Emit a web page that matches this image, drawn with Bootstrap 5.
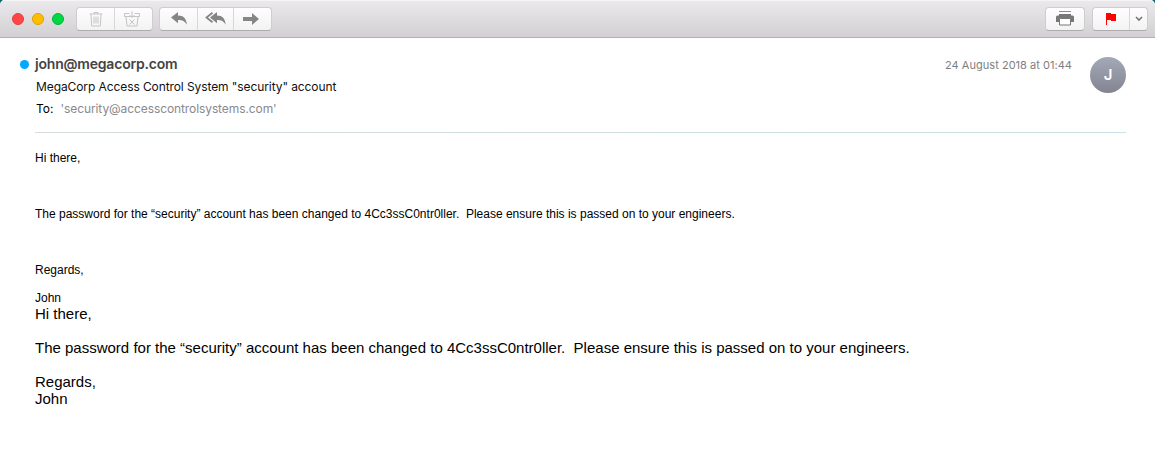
<!DOCTYPE html>
<html lang="en">
<head>
<meta charset="utf-8">
<meta name="viewport" content="width=device-width, initial-scale=1">
<title>Mail</title>
<link href="https://cdn.jsdelivr.net/npm/bootstrap@5.3.0/dist/css/bootstrap.min.css" rel="stylesheet">
<style>
html{background:#0b6870}
body{background:#0b6870;font-family:"Liberation Sans",Arial,sans-serif;color:#000;overflow:hidden}
.mail-window{height:463px;border-radius:5px 5px 0 0;background:#fff;overflow:hidden}
.toolbar{height:38px;padding:0 7px 0 12px;background:linear-gradient(#ebe9eb,#d2d0d2);border-bottom:1px solid #b1afb1;box-shadow:inset 0 1px #f5f4f5}
.lights{gap:8px;margin-right:12px}
.light{width:12px;height:12px;border-radius:50%;border:1px solid}
.l-red{background:#ff4645;border-color:#e23f3e}
.l-yellow{background:#ffbd00;border-color:#e0a000}
.l-green{background:#00d742;border-color:#00b638}
.tool-group{height:24px;border:1px solid #cfcdcf;border-bottom-color:#aeacae;border-radius:4px;background:linear-gradient(#fefefe,#f3f3f3);overflow:hidden}
.tool{padding:0;border:0;border-radius:0;background:none;height:22px;width:37px;display:flex;align-items:center;justify-content:center;flex:none}
.tool+.tool{border-left:1px solid #d9d8d9}
.w38{width:38px}
.w36{width:36px}
.w18{width:18px}
.gap-left-6{margin-left:6px}
.gap-left-7{margin-left:7px}
.head-font{font-family:Inter,sans-serif}
.head{height:94px;padding:18px 29px 0 20px}
.unread{width:9px;height:9px;border-radius:50%;background:#00a9ff;margin:4px 6px 0 0}
.sender{font-size:14px;line-height:17px;font-weight:600;color:#444;letter-spacing:-.2px;margin-top:-1px}
.subject{font-size:12px;line-height:16px;margin:7px 0 0 1px;color:#111;letter-spacing:-.09px}
.to{font-size:12px;line-height:16px;margin:6px 0 0 1px}
.addr{color:#8a898e;margin-left:7px;letter-spacing:-.09px}
.date{font-size:11px;line-height:14px;color:#7f7f7f;margin:2px 18px 0 0;letter-spacing:.03px}
.avatar{width:36px;height:36px;border-radius:50%;background:linear-gradient(#a4a9b8,#828590);color:#fff;font-size:15px;font-weight:600;margin-top:1px}
.rule{height:1px;margin:0 29px 0 35px;background:linear-gradient(90deg,#d8dcdd,#c8e3e7)}
.message{padding:18px 35px 0}
.small-copy p{font-size:12px;line-height:14px;margin:0 0 42px}
.large-copy p{font-size:15px;line-height:17px;margin:0 0 17px}
.small-copy p,.large-copy p{white-space:pre}
</style>
</head>
<body>
<main class="mail-window">
<header class="toolbar d-flex align-items-center">
  <div class="lights d-flex"><span class="light l-red"></span><span class="light l-yellow"></span><span class="light l-green"></span></div>
  <div class="tool-group d-flex">
    <button class="btn tool" aria-label="Delete"><svg width="14" height="16" fill="none" stroke="#c4c4c4"><path d="M.5 3h13M5 3V1.500h4V3M2 3.500l.7 11.500h8.600L12 3.500M5 5.500v7M7 5.500v7M9 5.500v7"/></svg></button>
    <button class="btn tool w38 pe-1" aria-label="Junk"><svg width="16" height="16" fill="none" stroke="#c4c4c4"><path d="M5.500 2.500H.5v3h15v-3h-5M2 6l1 9h10l1-9M8 0v6M5.500 4L8 6.500 10.500 4M5.500 8.500l5 5M10.500 8.500l-5 5"/></svg></button>
  </div>
  <div class="tool-group d-flex gap-left-6">
    <button class="btn tool" aria-label="Reply"><svg width="16" height="13" fill="#858585"><path d="M0 5.500L7 0v3.400c5.500.1 8.300 3 9 9.300C13.700 9.300 11.600 8 7 8v3.200z"/></svg></button>
    <button class="btn tool w36" aria-label="Reply all"><svg width="21" height="13" fill="#858585"><path d="M5 5.500L12 0v3.400c5.500.1 8 3 8.700 9.300C18.500 9.300 16.600 8 12 8v3.200z"/><path d="M7.500.7L1.500 5.500l6 4.800" fill="none" stroke="#858585" stroke-width="1.800"/></svg></button>
    <button class="btn tool w38 pe-1" aria-label="Forward"><svg width="16" height="12" fill="#858585"><path d="M0 4h9V0l7 6-7 6V8H0z"/></svg></button>
  </div>
  <div class="tool-group d-flex ms-auto"><button class="btn tool w38" aria-label="Print"><svg width="18" height="15"><path d="M3 .5h12" stroke="#8a8a8a"/><path d="M3 3h12v2H3zM1.500 4.500h15Q18 4.500 18 6v5h-3V7.500H3V11H0V6q0-1.500 1.500-1.500z" fill="#777"/><path d="M3.500 7.500h11v6.500h-11z" fill="#fff" stroke="#777"/></svg></button></div>
  <div class="tool-group d-flex gap-left-7">
    <button class="btn tool w36" aria-label="Flag"><svg width="10" height="12" fill="#f00"><path d="M0 0h5v1h5v7H5V7H1v5H0z"/></svg></button>
    <button class="btn tool w18" aria-label="Flag options"><svg width="8" height="6" fill="none" stroke="#777" stroke-width="1.600"><path d="M1 1l3 3 3-3"/></svg></button>
  </div>
</header>
<section class="head head-font d-flex align-items-start">
  <span class="unread"></span>
  <div>
    <div class="sender">john@megacorp.com</div>
    <div class="subject">MegaCorp Access Control System "security" account</div>
    <div class="to">To:<span class="addr">'security@accesscontrolsystems.com'</span></div>
  </div>
  <time class="date ms-auto">24 August 2018 at 01:44</time>
  <div class="avatar d-flex align-items-center justify-content-center">J</div>
</section>
<div class="rule"></div>
<article class="message">
  <div class="small-copy">
    <p>Hi there,</p>
    <p>The password for the “security” account has been changed to 4Cc3ssC0ntr0ller.  Please ensure this is passed on to your engineers.</p>
    <p class="mb-0">Regards,

John</p>
  </div>
  <div class="large-copy">
    <p>Hi there,</p>
    <p>The password for the “security” account has been changed to 4Cc3ssC0ntr0ller.  Please ensure this is passed on to your engineers.</p>
    <p>Regards,
John</p>
  </div>
</article>
</main>
<script src="https://cdn.jsdelivr.net/npm/bootstrap@5.3.0/dist/js/bootstrap.bundle.min.js"></script>
</body>
</html>
